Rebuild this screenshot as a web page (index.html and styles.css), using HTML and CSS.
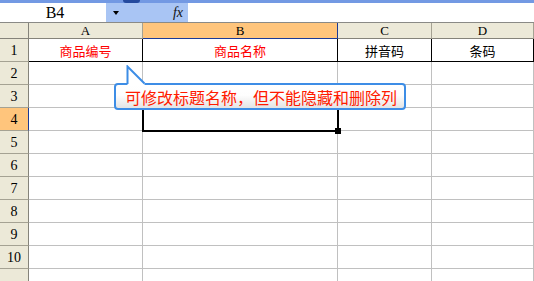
FILE: index.html
```html
<!DOCTYPE html>
<html lang="zh-CN">
<head>
    <meta charset="UTF-8"/>
    <title>商品列设置</title>
    <link rel="stylesheet" href="styles.css">
</head>
<body>
<div class="topbar"><span class="notch"></span></div>

<div class="formula-bar">
    <div class="name-box">B4</div>
    <div class="name-tools">
        <span class="arrow"></span>
        <span class="fx">fx</span>
    </div>
    <div class="formula-input"></div>
</div>

<div class="sheet">
    <div class="grid">
        <!-- column headers -->
        <div class="corner"></div>
        <div class="ch">A</div>
        <div class="ch active">B</div>
        <div class="ch">C</div>
        <div class="ch">D</div>

        <!-- row 1: titles -->
        <div class="rh">1</div>
        <div class="c title red">商品编号</div>
        <div class="c title red">商品名称</div>
        <div class="c title">拼音码</div>
        <div class="c title">条码</div>

        <div class="rh">2</div><div class="c"></div><div class="c"></div><div class="c"></div><div class="c"></div>
        <div class="rh">3</div><div class="c"></div><div class="c"></div><div class="c"></div><div class="c"></div>
        <div class="rh active">4</div><div class="c"></div><div class="c"></div><div class="c"></div><div class="c"></div>
        <div class="rh">5</div><div class="c"></div><div class="c"></div><div class="c"></div><div class="c"></div>
        <div class="rh">6</div><div class="c"></div><div class="c"></div><div class="c"></div><div class="c"></div>
        <div class="rh">7</div><div class="c"></div><div class="c"></div><div class="c"></div><div class="c"></div>
        <div class="rh">8</div><div class="c"></div><div class="c"></div><div class="c"></div><div class="c"></div>
        <div class="rh">9</div><div class="c"></div><div class="c"></div><div class="c"></div><div class="c"></div>
        <div class="rh">10</div><div class="c"></div><div class="c"></div><div class="c"></div><div class="c"></div>
        <div class="rh"></div><div class="c"></div><div class="c"></div><div class="c"></div><div class="c"></div>
    </div>

    <!-- selected cell B4 -->
    <div class="selection"><span class="handle"></span></div>

    <!-- tip balloon -->
    <div class="callout">可修改标题名称，但不能隐藏和删除列</div>
    <svg class="callout-tail" width="20" height="22" viewBox="0 0 20 22">
        <polygon points="1.5,21 1.5,1.5 18.5,18.5 18.5,21" fill="#ffffff"/>
        <polyline points="1.5,19 1.5,1.5 18.5,18.5" fill="none" stroke="#3d8de6" stroke-width="2"/>
    </svg>
</div>
</body>
</html>
```

FILE: styles.css
```css
* {
    margin: 0;
    padding: 0;
    box-sizing: border-box;
}
body {
    width: 534px;
    height: 281px;
    overflow: hidden;
    background: #fff;
    font-family: "Liberation Serif", serif;
}
.topbar {
    position: relative;
    height: 3px;
    background: #7399e3;
}
.notch {
    position: absolute;
    left: 123px;
    top: 0;
    width: 17px;
    height: 3px;
    border-radius: 0 0 3px 3px;
    background: #244a9e;
}
.formula-bar {
    display: flex;
    height: 20px;
    border-bottom: 1px solid #8a8a86;
}
.name-box {
    width: 106px;
    font-size: 16px;
    line-height: 19px;
    text-align: center;
    padding-left: 4px;
    color: #000;
}
.name-tools {
    width: 82px;
    display: flex;
    align-items: center;
    justify-content: space-between;
    padding: 0 5px 0 7px;
    background: #a9c5f4;
}
.arrow {
    width: 0;
    height: 0;
    border-left: 3.5px solid transparent;
    border-right: 3.5px solid transparent;
    border-top: 4px solid #000;
    margin-top: 1px;
}
.fx {
    font-style: italic;
    font-size: 14px;
    color: #111;
}
.formula-input {
    flex: 1;
}
.sheet {
    position: relative;
}
.grid {
    display: grid;
    grid-template-columns: 29px 114px 195px 94px 1fr;
    grid-template-rows: 16px repeat(11, 23px);
}
.corner,
.ch,
.rh {
    background: #ece9d8;
    border-right: 1px solid #a5a293;
    border-bottom: 1px solid #a5a293;
    font-size: 13px;
    color: #000;
}
.ch {
    text-align: center;
    line-height: 15px;
    border-bottom-color: #85837a;
}
.corner {
    border-bottom-color: #85837a;
    border-right-color: #85837a;
}
.rh {
    display: flex;
    align-items: flex-end;
    justify-content: center;
    padding-bottom: 2px;
    font-size: 14px;
    border-right-color: #85837a;
}
.ch.active {
    background: #ffc57c;
    border-right-color: #1b3a96;
    border-bottom-color: #1b3a96;
}
.rh.active {
    background: #ffc57c;
    border-right-color: #1b3a96;
}
.c {
    border-right: 1px solid #c0c0c0;
    border-bottom: 1px solid #c0c0c0;
}
.c.title {
    display: flex;
    align-items: center;
    justify-content: center;
    border-right-color: #000;
    border-bottom-color: #000;
    font-family: "Noto Sans CJK SC", sans-serif;
    font-size: 13px;
    color: #000;
}
.c.red {
    color: #ff0000;
}
.selection {
    position: absolute;
    left: 142px;
    top: 84px;
    width: 197px;
    height: 25px;
    border: 2px solid #000;
}
.handle {
    position: absolute;
    right: -4px;
    bottom: -4px;
    width: 6px;
    height: 6px;
    background: #000;
}
.callout {
    position: absolute;
    left: 114px;
    top: 60px;
    width: 292px;
    height: 27px;
    display: flex;
    align-items: center;
    padding-left: 9px;
    border: 2px solid #3d8de6;
    border-radius: 4px;
    background: linear-gradient(#ffffff, #fdfdfd 45%, #e4e4e4);
    font-family: "Noto Sans CJK SC", sans-serif;
    font-size: 16px;
    color: #ff1a00;
    white-space: nowrap;
}
.callout-tail {
    position: absolute;
    left: 126px;
    top: 42px;
}
```
